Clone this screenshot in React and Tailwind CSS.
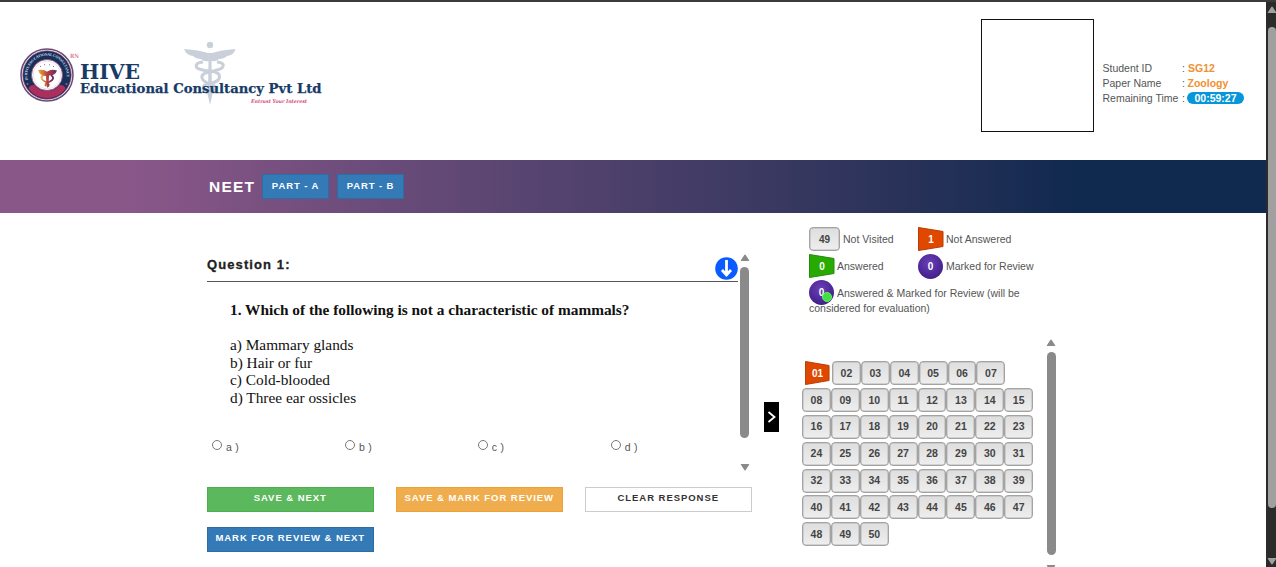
const statusText = "font-bold text-white text-[10px] flex items-center justify-center shrink-0";

function Emblem() {
  return (
    <svg width="54" height="54" viewBox="0 0 54 54" className="shrink-0">
      <defs>
        <path id="ring" d="M8 32A19.600 19.600 0 1 1 46 32" />
        <linearGradient id="gold" x1="0" x2="1">
          <stop offset="0" stopColor="#e9b23c" />
          <stop offset=".5" stopColor="#b5403f" />
          <stop offset="1" stopColor="#652a69" />
        </linearGradient>
      </defs>
      <circle cx="27" cy="27" r="26" fill="#fff" stroke="#6a4a78" strokeWidth="1.500" />
      <circle cx="27" cy="27" r="24.300" fill="#16305a" stroke="#b35b83" strokeWidth="0.700" />
      <path d="M8.500 41A23 23 0 0 0 45.500 41Q45 37 40 37A17 17 0 0 1 14 37Q9 37 8.500 41Z" fill="#ad2e5d" />
      <circle cx="27" cy="27" r="15.500" fill="#fff" stroke="#8b4872" strokeWidth="0.800" />
      <circle cx="27" cy="27" r="13.800" fill="#fff" stroke="#d9c4d2" strokeWidth="0.500" />
      <text fontSize="3.800" fontWeight="bold" fill="#d5dceb" fontFamily="Liberation Serif, serif">
        <textPath href="#ring" textLength="68">IN HIVE EDUCATIONAL CONSULTANCY</textPath>
      </text>
      <path d="M18 22Q24 21 26.500 23.500L27.500 23.500Q31 20.500 37 22.500Q35 28 29 27.500L28.500 38L26.500 38L26 28Q20 28 18 22Z" fill="url(#gold)" />
      <path d="M23 27Q19 31 26 34Q31 37 27 39M31 27Q36 31 29 34Q24 36 26 38" fill="none" stroke="url(#gold)" strokeWidth="1.800" />
      <path d="M20 19L21 18M24 17L25 16.500M29 16.500L30 17M33 18L34 19" stroke="#8b7898" strokeWidth="1" />
      <g fill="#b35b83"><circle cx="7.500" cy="36" r="1" /><circle cx="46.500" cy="36" r="1" /></g>
    </svg>
  );
}

function Wordmark() {
  return (
    <svg width="256" height="70" viewBox="74 40 256 70" fontFamily="DejaVu Serif, Liberation Serif, serif">
      <g fill="#c9d0da">
        <circle cx="210" cy="45" r="3.200" />
        <path d="M184 49Q199 50 208 53L212 53Q221 50 235.500 49Q234 55 227 56Q224 59 219 59Q216 62 211.500 61L212 96L210 105L208 96L208.500 61Q204 62 201 59Q196 59 193 56Q186 55 184 49Z" />
      </g>
      <path d="M203 62Q194 63 197 68Q200 70 209 71Q222 72 219 79Q216 83 207 84Q201 86 205 91L212 95M217 62Q226 63 222 68Q219 70 209 72Q199 74 203 80Q206 83 213 85Q218 88 213 91L208 95" fill="none" stroke="#c9d0da" strokeWidth="3" />
      <text x="70" y="58" fontSize="6" fontWeight="bold" fill="#dc7b9b" textLength="9" lengthAdjust="spacingAndGlyphs">RN</text>
      <g fill="#173b66" fontWeight="bold">
        <text x="80" y="79" fontSize="20" textLength="60" lengthAdjust="spacingAndGlyphs">HIVE</text>
        <text x="80" y="93" fontSize="13" stroke="#173b66" strokeWidth=".25" textLength="241.500" lengthAdjust="spacingAndGlyphs">Educational Consultancy Pvt Ltd</text>
      </g>
      <text x="251" y="103" fontSize="5" fontWeight="bold" fontStyle="italic" fill="#d14e79" textLength="56" lengthAdjust="spacingAndGlyphs">Entrust Your Interest</text>
    </svg>
  );
}

function Arrow({ down = false, light = false }) {
  return (
    <svg width="10" height="8" viewBox="0 0 10 8" className="shrink-0">
      <path d={down ? "M1.300 1H8.700Q9.600 1 9 2L5.700 7Q5 8 4.300 7L1 2Q.4 1 1.300 1Z" : "M1.300 7H8.700Q9.600 7 9 6L5.700 1Q5 0 4.300 1L1 6Q.4 7 1.300 7Z"} fill={light ? "#a0a0a0" : "#8a8a8a"} />
    </svg>
  );
}

function Flag({ color, edge, size, children }) {
  return (
    <span className={`relative ${statusText} ${size}`}>
      <svg viewBox="0 0 26 24" preserveAspectRatio="none" className="absolute inset-0 size-full">
        <path d="M.5.5L25 4.500V19.500L.5 23.500Z" fill={color} stroke={edge} />
      </svg>
      <span className="relative">{children}</span>
    </span>
  );
}

const ball = `${statusText} relative size-[25px] rounded-full bg-[radial-gradient(circle_at_45%_35%,#6a40b4_0%,#4d2798_55%,#351678_100%)]`;
const tile = "flex items-center justify-center shrink-0 border border-[#a3a3a3] rounded-[4px] bg-linear-to-b from-[#dedede] to-[#eeeeee] shadow-[inset_0_0_0_0.5px_#b5b5b5]";

const rows = [[2, 7], [8, 15], [16, 23], [24, 31], [32, 39], [40, 47], [48, 50]];

function Palette() {
  return (
    <div className="flex flex-col w-[232px] gap-[3px] pt-[24px] text-[10.5px] font-bold text-[#444]">
      {rows.map(([a, b]) => (
        <div key={a} className="flex h-[23.9px]">
          {a === 2 && <Flag color="#e04800" edge="#b73b08" size="w-[25px] h-[24px] ml-[3px] mr-[2px]">01</Flag>}
          {Array.from({ length: b - a + 1 }, (_, i) => (
            <span key={i} className={`${tile} w-[28.9px] h-[24px] pt-px`}>{String(a + i).padStart(2, "0")}</span>
          ))}
        </div>
      ))}
    </div>
  );
}

function Info({ label, children }) {
  return (
    <div className="flex h-[15px] items-center">
      <span className="w-[79.500px]">{label}</span>
      <span className="w-[5px]">:</span>
      {children}
    </div>
  );
}

const action = "h-[25px] w-[166.500px] flex justify-center pt-[4px] text-[9.5px] leading-[12px] font-bold tracking-[0.95px] whitespace-nowrap border";

export default function App() {
  return (
    <div className="flex w-[1276px] h-[567px] overflow-hidden bg-white border-t-2 border-[#3b3b3b] font-['Liberation_Sans',Arial,sans-serif] text-[#555]">
      <div className="w-[1266px] shrink-0 flex flex-col">
        <header className="h-[158px] shrink-0 flex">
          <div className="flex w-[981px] pl-[20px] pt-[38px]">
            <div className="pt-[8px]"><Emblem /></div>
            <div className="[&>svg]:overflow-visible"><Wordmark /></div>
          </div>
          <div className="w-[113px] h-[113px] mt-[17px] border border-[#111] shrink-0" />
          <div className="pl-[8.500px] pt-[59px] text-[10.5px] whitespace-nowrap">
            <Info label="Student ID"><b className="text-[#f09030] ml-px">SG12</b></Info>
            <Info label="Paper Name"><b className="text-[#f09030] ml-[0.5px]">Zoology</b></Info>
            <Info label="Remaining Time"><b className="bg-[#0796d9] text-white rounded-full w-[57px] h-[12px] -mt-px leading-[12px] text-center">00:59:27</b></Info>
          </div>
        </header>
        <nav className="h-[53px] shrink-0 flex items-start pl-[209px] bg-linear-to-r from-[#8a5789] from-10% to-[#10294f] to-85% font-bold text-white">
          <h1 className="w-[53px] pt-[17px] text-[15.500px] leading-[20px] tracking-[1.2px]">NEET</h1>
          <button className="w-[67px] h-[25px] mt-[14px] mr-[8px] pb-px bg-[#337ab7] border border-[#2e6da4] text-[9.5px] tracking-[0.9px]">PART - A</button>
          <button className="w-[67px] h-[25px] mt-[14px] pb-px bg-[#337ab7] border border-[#2e6da4] text-[9.5px] tracking-[0.9px]">PART - B</button>
        </nav>
        <main className="flex pl-[207px]">
          <section className="w-[545px] shrink-0 pt-[39px]">
            <div className="flex h-[225px]">
              <div className="w-[530.500px] text-[#111]">
                <div className="h-[30px] flex justify-between border-b border-[#555]">
                  <h2 className="pt-[4px] text-[13px] leading-[18px] font-bold tracking-[1.1px] text-[#222] [-webkit-text-stroke:0.3px_#222]">Question 1:</h2>
                  <svg width="23" height="23" viewBox="0 0 23 23" className="mt-[5px]">
                    <circle cx="11.500" cy="11.500" r="11.300" fill="#0b5cff" />
                    <path d="M11.500 3V18M7 13L11.500 18L16 13" fill="none" stroke="#fff" strokeWidth="2.800" />
                  </svg>
                </div>
                <div className="pl-[23px] pt-[19px] font-['Liberation_Serif','Times_New_Roman',serif] text-[15.340px] leading-[17.8px] whitespace-nowrap">
                  <p className="font-bold mb-[17px]">1. Which of the following is not a characteristic of mammals?</p>
                  <p>a) Mammary glands</p>
                  <p>b) Hair or fur</p>
                  <p>c) Cold-blooded</p>
                  <p>d) Three ear ossicles</p>
                </div>
                <div className="flex pl-[5px] pt-[33px] text-[10.5px] text-[#555]">
                  {["a )", "b )", "c )", "d )"].map((label, i) => (
                    <label key={i} className="flex shrink-0 w-[132.900px] tracking-[0.3px]">
                      <span className="size-[10px] mr-[4px] rounded-full border border-[#777]" />
                      <span className="leading-[14px]">{label}</span>
                    </label>
                  ))}
                </div>
              </div>
              <div className="w-[14px] flex flex-col items-center pt-[2px]">
                <Arrow />
                <div className="w-[9px] h-[171px] mt-[5px] mb-[25px] rounded-full bg-[#8a8a8a]" />
                <Arrow down />
              </div>
            </div>
            <div className="flex flex-wrap pt-[10px] gap-x-[22.500px] gap-y-[14.500px]">
              <button className={`${action} bg-[#5cb85c] border-[#4cae4c] text-white`}>SAVE &amp; NEXT</button>
              <button className={`${action} bg-[#f0ad4e] border-[#eea236] text-white`}>SAVE &amp; MARK FOR REVIEW</button>
              <button className={`${action} bg-white border-[#ccc] text-[#333]`}>CLEAR RESPONSE</button>
              <button className={`${action} bg-[#337ab7] border-[#2e6da4] text-white`}>MARK FOR REVIEW &amp; NEXT</button>
            </div>
          </section>
          <div className="ml-[12px] mt-[189px] w-[15px] h-[30px] bg-black flex items-center justify-center">
            <svg width="9" height="14" viewBox="0 0 9 14"><path d="M1.500 2L7.500 7L1.500 12" fill="none" stroke="#fff" strokeWidth="1.800" /></svg>
          </div>
          <aside className="ml-[23px] w-[256px] pt-[14px] text-[10.5px]">
            <div className="pl-[7px] h-[110px]">
              <div className="flex items-center h-[24px]">
                <span className={`${tile} w-[31px] h-[24px] mr-[3px] text-[10px] font-bold text-[#444]`}>49</span>
                <span className="w-[75px] pt-[2px]">Not Visited</span>
                <Flag color="#e04800" edge="#b73b08" size="w-[26px] h-[24px] mr-[2px]">1</Flag>
                <span className="pt-[2px]">Not Answered</span>
              </div>
              <div className="flex items-center h-[24px] mt-[3px]">
                <Flag color="#27ab00" edge="#278814" size="w-[26px] h-[24px] mr-[2px]">0</Flag>
                <span className="w-[81px] pt-[2px]">Answered</span>
                <span className={`${ball} mr-[3px]`}>0</span>
                <span className="pt-[2px]">Marked for Review</span>
              </div>
              <div className="flex items-start mt-[2px] h-[20px]">
                <span className={`${ball} mr-[3px]`}>0
                  <i className="absolute left-[13px] top-[12px] size-[10px] rounded-full bg-[#42df42] border border-[#65f365]" />
                </span>
                <span className="leading-[27px] whitespace-nowrap">Answered &amp; Marked for Review (will be</span>
              </div>
              <p className="relative leading-[16px]">considered for evaluation)</p>
            </div>
            <div className="flex h-[232px]">
              <div className="w-[242px]"><Palette /></div>
              <div className="w-[14px] flex flex-col items-center pt-[2px]">
                <Arrow />
                <div className="w-[9px] h-[203px] shrink-0 mt-[5px] mb-[9px] rounded-full bg-[#8a8a8a]" />
                <Arrow down />
              </div>
            </div>
          </aside>
        </main>
      </div>
      <div className="w-[10px] shrink-0 bg-[#2b2b2b] flex flex-col items-center pl-[2px] pt-[4px]">
        <Arrow light />
        <div className="w-[8px] h-[481px] shrink-0 mt-[13px] mb-[49px] rounded-full bg-[#a0a0a0]" />
        <Arrow light down />
      </div>
    </div>
  );
}
